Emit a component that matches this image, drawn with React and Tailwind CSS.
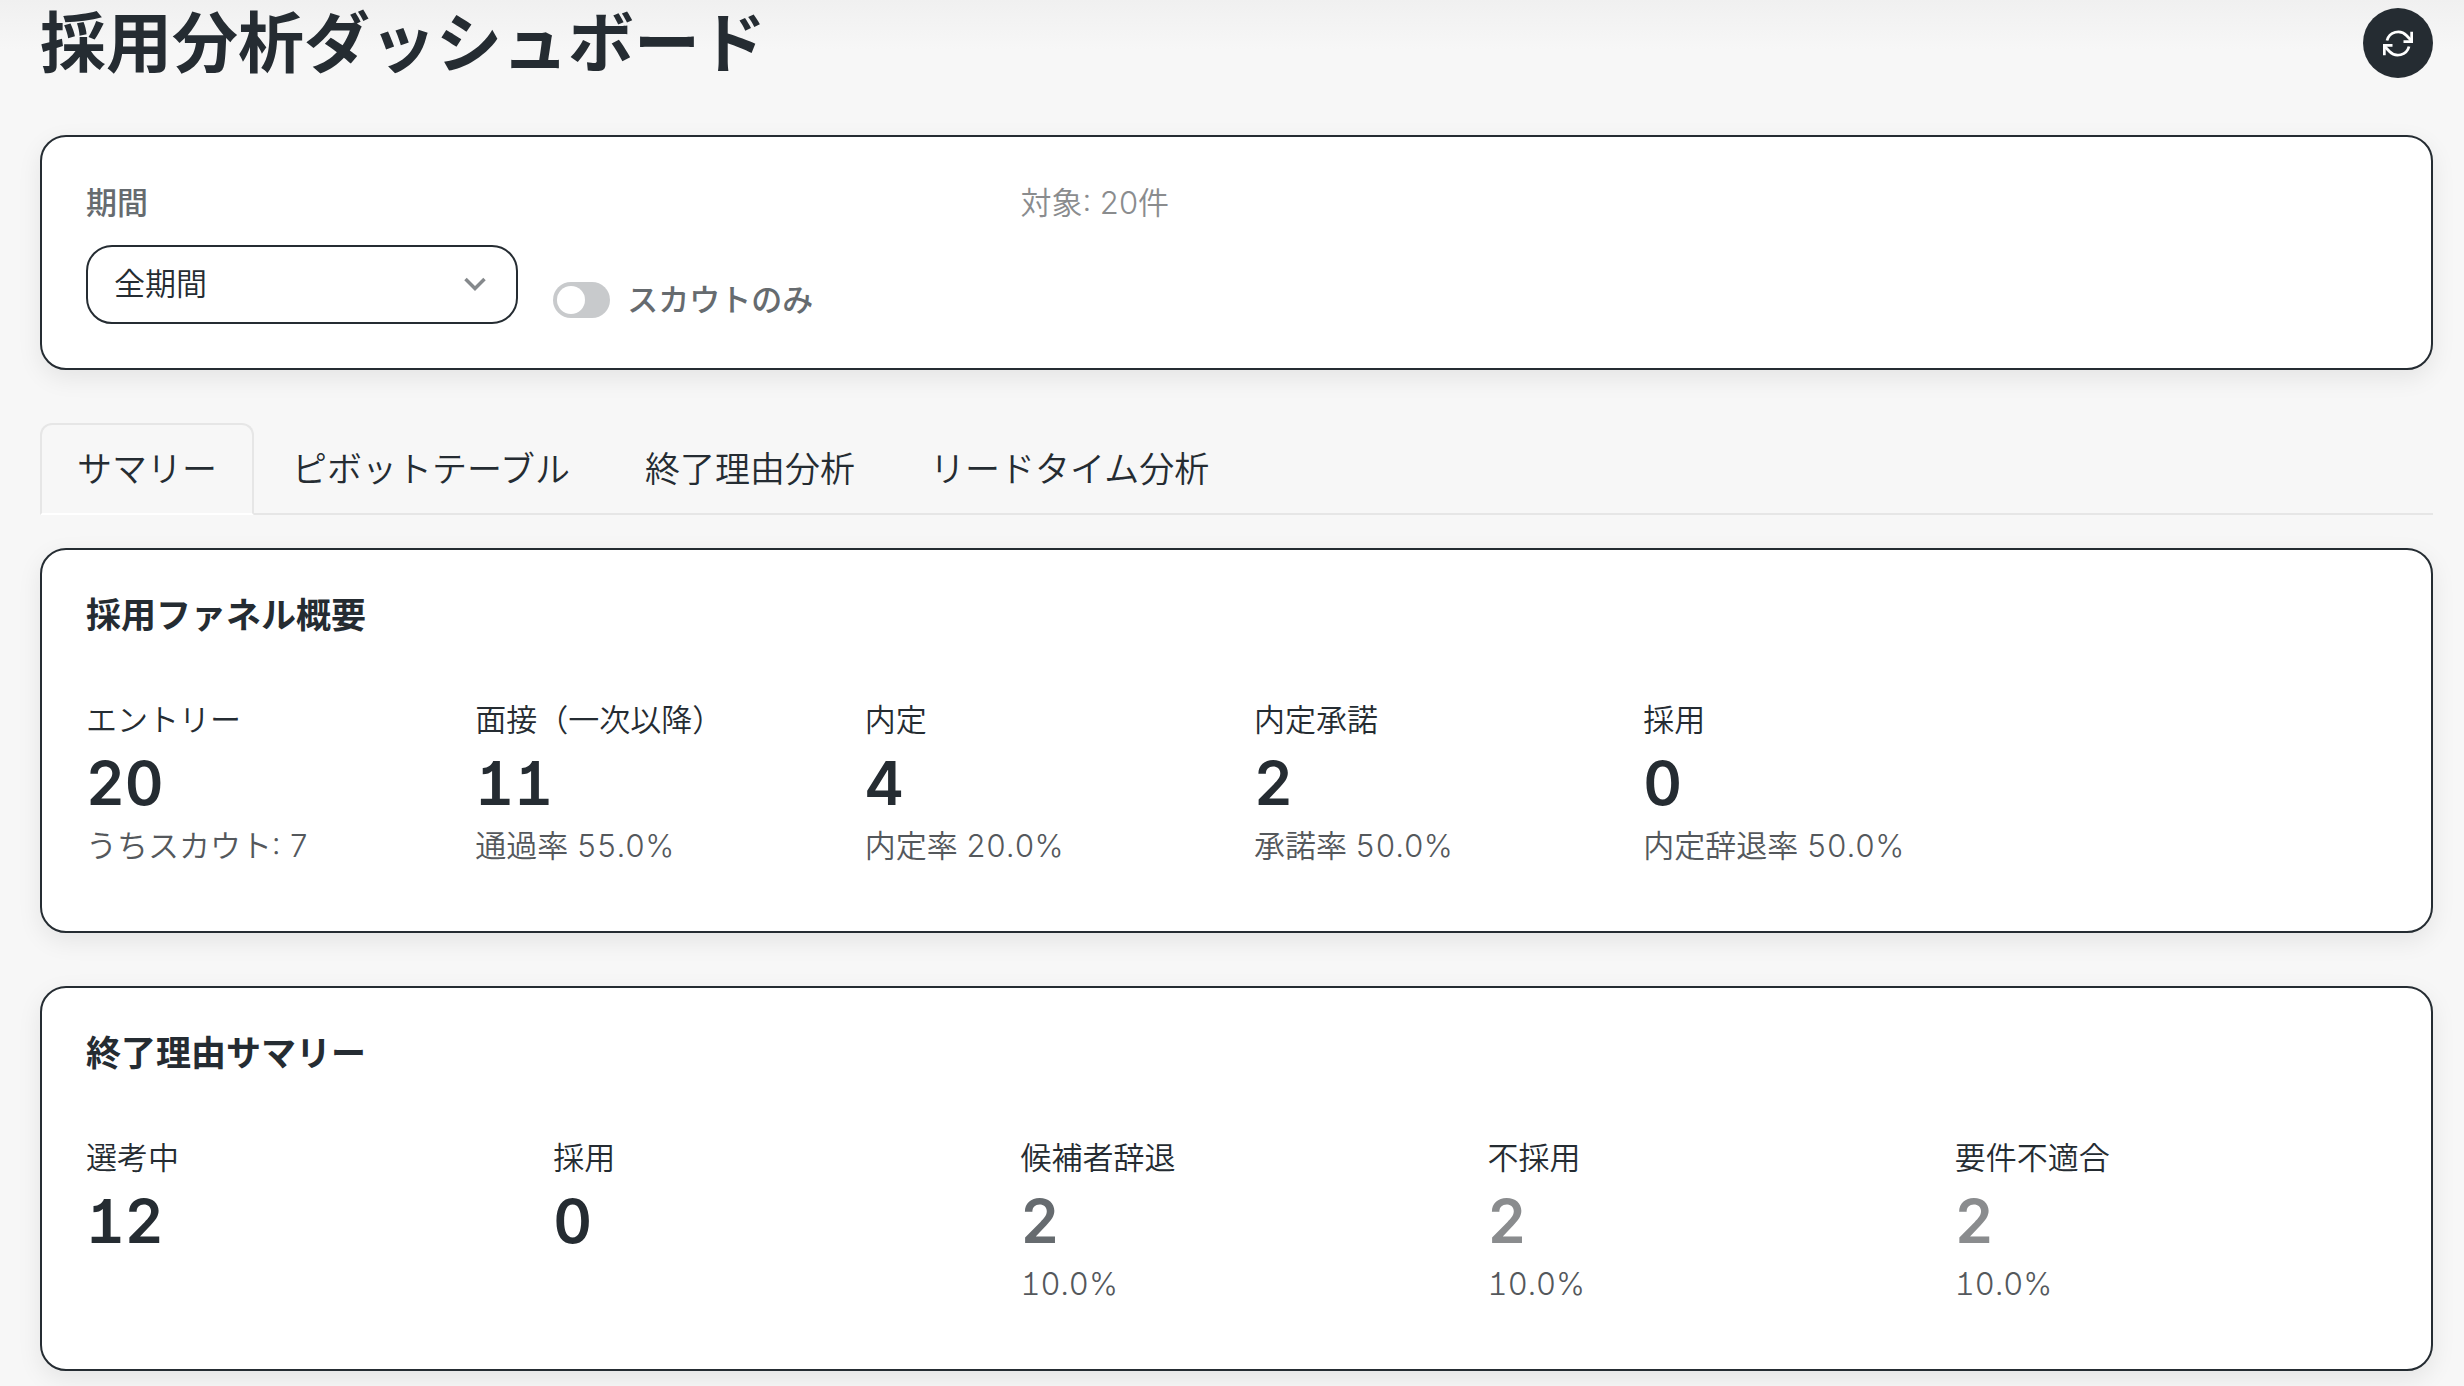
import { useState } from "react";

const tabs = [
  { id: "summary", label: "サマリー" },
  { id: "pivot", label: "ピボットテーブル" },
  { id: "reasons", label: "終了理由分析" },
  { id: "leadtime", label: "リードタイム分析" },
];

const funnel = [
  { label: "エントリー", value: 20, note: "うちスカウト: 7" },
  { label: "面接（一次以降）", value: 11, note: "通過率 55.0%" },
  { label: "内定", value: 4, note: "内定率 20.0%" },
  { label: "内定承諾", value: 2, note: "承諾率 50.0%" },
  { label: "採用", value: 0, note: "内定辞退率 50.0%" },
];

const reasons = [
  { label: "選考中", value: 12, color: "text-[#252c32]" },
  { label: "採用", value: 0, color: "text-[#252c32]" },
  { label: "候補者辞退", value: 2, note: "10.0%", color: "text-[#666b6f]" },
  { label: "不採用", value: 2, note: "10.0%", color: "text-[#8a8c8e]" },
  { label: "要件不適合", value: 2, note: "10.0%", color: "text-[#8a8c8e]" },
];

const RefreshIcon = () => (
  <svg viewBox="0 0 30 27" className="h-[27px] w-[30px] fill-none stroke-current stroke-[2.8]">
    <path d="M4 10.5A11.5 11.5 0 0 1 23.5 5.5L28.5 10.8" />
    <path d="M28.7 1.8V11.6H20.5" />
    <path d="M26 16.5A11.5 11.5 0 0 1 6.5 21.5L1.5 16.2" />
    <path d="M1.3 25.2V15.4H9.5" />
  </svg>
);

const Card = ({ children, className = "" }) => (
  <section
    className={`rounded-[26px] border-2 border-[#252c32] bg-white px-11 shadow-[0_8px_24px_rgba(0,0,0,0.08)] ${className}`}
  >
    {children}
  </section>
);

const Stat = ({ label, value, note, color = "text-[#252c32]" }) => (
  <div className="[font-feature-settings:'tnum','cv01']">
    <dt className="text-[31px] leading-[48px] font-[350]">{label}</dt>
    <dd className={`text-[60px] leading-[78px] font-semibold ${color}`}>{value}</dd>
    {note && <dd className="text-[31px] leading-[48px] font-[350] text-[#54585c]">{note}</dd>}
  </div>
);

const App = () => {
  const [activeTab, setActiveTab] = useState("summary");
  const [period, setPeriod] = useState("all");
  const [scoutOnly, setScoutOnly] = useState(false);

  return (
    <div className="min-h-screen bg-[#f7f7f7] bg-[linear-gradient(#f0f0f0,#f7f7f7_50px)] pt-2 pr-[31px] pb-[15px] pl-10 font-['Inter','Noto_Sans_CJK_JP',sans-serif] text-[#252c32]">
      <header className="mb-[57px] flex h-[70px] items-center justify-between">
        <h1 className="text-[66px] leading-[70px] font-bold">採用分析ダッシュボード</h1>
        <button
          aria-label="更新"
          className="flex size-[70px] items-center justify-center rounded-full bg-[#252c32] text-white"
        >
          <RefreshIcon />
        </button>
      </header>

      <Card className="mb-[53px] grid grid-cols-5 gap-[35px] pt-[42px] pb-11">
        <div>
          <label htmlFor="period" className="mb-[18px] block text-[31px] leading-[48px] font-medium text-[#666b6f]">
            期間
          </label>
          <div className="relative">
            <select
              id="period"
              value={period}
              onChange={(e) => setPeriod(e.target.value)}
              className="h-[79px] w-full appearance-none rounded-[26px] border-2 border-[#252c32] bg-white px-[26px] text-[31px] font-[350]"
            >
              <option value="all">全期間</option>
            </select>
            <svg
              viewBox="0 0 22 14"
              className="pointer-events-none absolute top-8 right-8 h-[14px] w-[22px] fill-none stroke-[#85898c] stroke-[3.5]"
            >
              <path d="M1.5 2 11 11.5 20.5 2" />
            </svg>
          </div>
        </div>
        <label className="flex items-center gap-[17px] self-end pb-1 text-[31px] leading-[40px] font-medium text-[#666b6f]">
          <input
            type="checkbox"
            role="switch"
            checked={scoutOnly}
            onChange={(e) => setScoutOnly(e.target.checked)}
            className="h-9 w-[57px] appearance-none rounded-full bg-[#c8cacc] p-1 before:block before:size-7 before:rounded-full before:bg-white checked:bg-[#252c32] checked:before:ml-auto"
          />
          スカウトのみ
        </label>
        <p className="text-[31px] leading-[48px] font-[350] text-[#8a8c8e]">対象: 20件</p>
      </Card>

      <div role="tablist" className="mb-[33px] flex gap-px border-b-2 border-[#e6e6e6]">
        {tabs.map((tab) => (
          <button
            key={tab.id}
            role="tab"
            aria-selected={activeTab === tab.id}
            onClick={() => setActiveTab(tab.id)}
            className={`-mb-[2px] h-[92px] rounded-t-xl border-2 px-[35px] text-[35px] leading-[48px] font-[350] ${
              activeTab === tab.id ? "border-[#e6e6e6] border-b-white" : "border-transparent"
            }`}
          >
            {tab.label}
          </button>
        ))}
      </div>

      <Card className="mb-[53px] pt-[41px] pb-[61px]">
        <h2 className="mb-[57px] text-[35px] leading-[48px] font-bold">採用ファネル概要</h2>
        <dl className="grid grid-cols-6 gap-[35px]">
          {funnel.map((item) => (
            <Stat key={item.label} {...item} />
          ))}
        </dl>
      </Card>

      <Card className="pt-[41px] pb-[61px]">
        <h2 className="mb-[57px] text-[35px] leading-[48px] font-bold">終了理由サマリー</h2>
        <dl className="grid grid-cols-5 gap-[35px]">
          {reasons.map((item) => (
            <Stat key={item.label} {...item} />
          ))}
        </dl>
      </Card>
    </div>
  );
};

export default App;
